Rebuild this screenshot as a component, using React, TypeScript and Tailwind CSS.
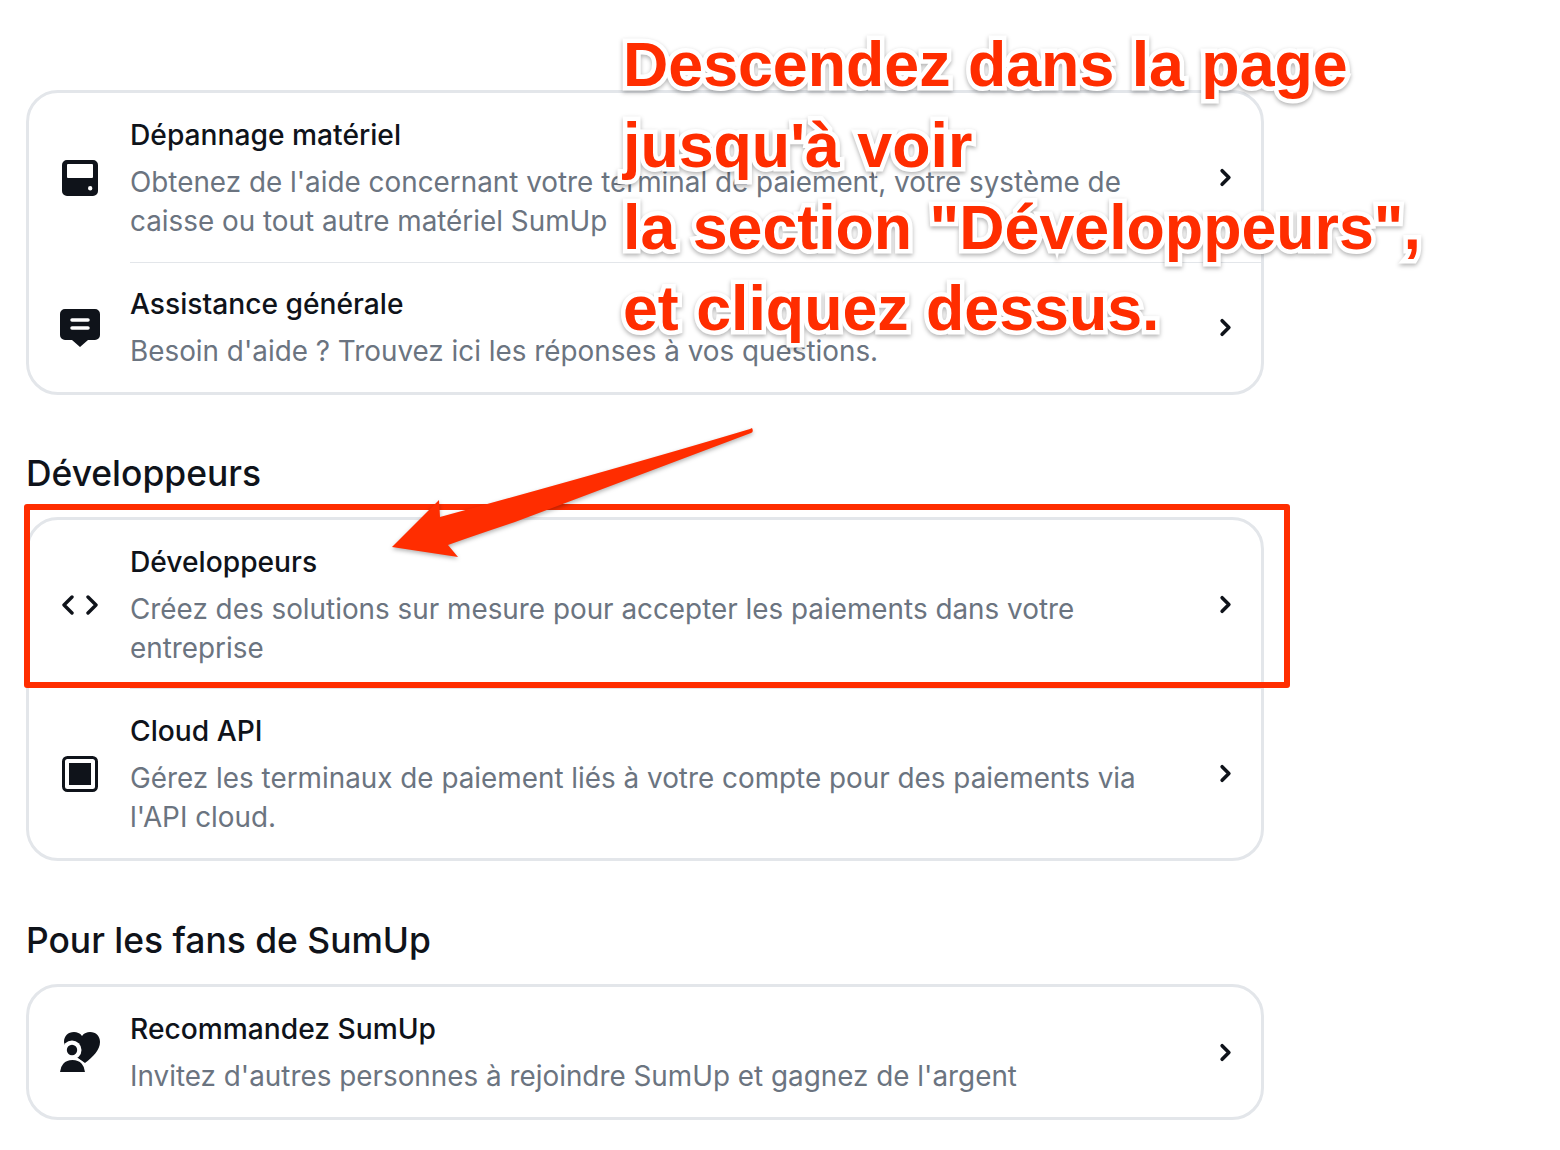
import { ChevronRight } from 'lucide-react'
import type { ReactNode } from 'react'

function TerminalIcon() {
  return (
    <svg viewBox="0 0 36 36" className="h-9 w-9" fill="none">
      <path fillRule="evenodd" clipRule="evenodd" fill="#0f131a" d="M5 0h26a5 5 0 0 1 5 5v26a5 5 0 0 1-5 5H5a5 5 0 0 1-5-5V5a5 5 0 0 1 5-5Zm0 5v12a1 1 0 0 0 1 1h24a1 1 0 0 0 1-1V5a1 1 0 0 0-1-1H6a1 1 0 0 0-1 1Zm23.2 21a2.2 2.2 0 1 0 0 4.4 2.2 2.2 0 0 0 0-4.4Z" />
    </svg>
  )
}

function ChatIcon() {
  return (
    <svg viewBox="0 0 40 38" className="h-[38px] w-10" fill="none">
      <path fill="#0f131a" d="M5 0h30a5 5 0 0 1 5 5v21a5 5 0 0 1-5 5h-7l-8 7-8-7H5a5 5 0 0 1-5-5V5a5 5 0 0 1 5-5Z" />
      <path stroke="#fff" strokeWidth="3.5" strokeLinecap="round" d="M12 11h16M12 19h16" />
    </svg>
  )
}

function CodeIcon() {
  return (
    <svg viewBox="0 0 36 20" className="h-5 w-9" fill="none" stroke="#0f131a" strokeWidth="3.4" strokeLinecap="round" strokeLinejoin="round">
      <path d="M10 2 2 10l8 8M26 2l8 8-8 8" />
    </svg>
  )
}

function SquareIcon() {
  return (
    <svg viewBox="0 0 36 36" className="h-9 w-9" fill="none">
      <rect x="1.5" y="1.5" width="33" height="33" rx="4" stroke="#0f131a" strokeWidth="3" />
      <rect x="7" y="7" width="22" height="22" fill="#0f131a" />
    </svg>
  )
}

function FanIcon() {
  return (
    <svg viewBox="0 0 40 40" className="h-10 w-10" fill="none">
      <path fill="#0f131a" d="M22 4C24 1 27 0 30 0c6 0 10 4 10 10 0 8-7 15-15 21C17 25 4 18 4 10 4 4 8 0 14 0c3 0 6 1 8 4Z" />
      <circle cx="12" cy="18" r="9.5" fill="#fff" />
      <circle cx="12" cy="18" r="5.2" fill="#0f131a" />
      <path fill="#0f131a" stroke="#fff" strokeWidth="2" d="M-1 41c0-8 5-14 13.5-14S26 33 26 41Z" />
    </svg>
  )
}

interface RowProps {
  icon: ReactNode
  title: string
  lines: string[]
  top: string
  bottom: string
  divider?: boolean
}

function Row({ icon, title, lines, top, bottom, divider }: RowProps) {
  return (
    <div className="flex items-center">
      <div className="flex w-[101px] shrink-0 items-center justify-center">{icon}</div>
      <div className={`flex flex-1 items-center pr-[22px] ${divider ? 'border-b border-[#e3e6ea]' : ''}`}>
        <div className={`flex-1 ${top} ${bottom}`}>
          <div className="text-[28.2px] leading-[34px] font-[550] text-[#0f131a]">{title}</div>
          <div className="mt-[11px] text-[27.85px] leading-[39px] text-[#6b7480]">
            {lines.map(line => <div key={line}>{line}</div>)}
          </div>
        </div>
        <ChevronRight className="h-[27px] w-[27px] text-[#0f131a]" strokeWidth={3.2} />
      </div>
    </div>
  )
}

function Card({ children }: { children: ReactNode }) {
  return <div className="w-[1238px] rounded-[32px] border-[3px] border-[#e3e6ea] bg-white">{children}</div>
}

function Heading({ children }: { children: ReactNode }) {
  return <h2 className="text-[35.4px] leading-[44px] font-[550] text-[#0f131a]">{children}</h2>
}

export default function App() {
  return (
    <div className="relative h-[1150px] w-[1560px] overflow-hidden bg-white pt-[90px] pl-[26px] font-['Inter',sans-serif]">
      <Card>
        <Row
          divider
          icon={<TerminalIcon />}
          title="Dépannage matériel"
          lines={["Obtenez de l'aide concernant votre terminal de paiement, votre système de", 'caisse ou tout autre matériel SumUp']}
          top="pt-[25px]"
          bottom="pb-[21px]"
        />
        <Row
          icon={<ChatIcon />}
          title="Assistance générale"
          lines={["Besoin d'aide ? Trouvez ici les réponses à vos questions."]}
          top="pt-[24px]"
          bottom="pb-[21px]"
        />
      </Card>

      <div className="mt-[57px] mb-[21px]"><Heading>Développeurs</Heading></div>

      <Card>
        <Row
          divider
          icon={<CodeIcon />}
          title="Développeurs"
          lines={['Créez des solutions sur mesure pour accepter les paiements dans votre', 'entreprise']}
          top="pt-[25px]"
          bottom="pb-[20px]"
        />
        <Row
          icon={<SquareIcon />}
          title="Cloud API"
          lines={["Gérez les terminaux de paiement liés à votre compte pour des paiements via", "l'API cloud."]}
          top="pt-[25px]"
          bottom="pb-[21px]"
        />
      </Card>

      <div className="mt-[58px] mb-[21px]"><Heading>Pour les fans de SumUp</Heading></div>

      <Card>
        <Row
          icon={<FanIcon />}
          title="Recommandez SumUp"
          lines={["Invitez d'autres personnes à rejoindre SumUp et gagnez de l'argent"]}
          top="pt-[25px]"
          bottom="pb-[21px]"
        />
      </Card>

      {/* annotations on top of the screenshot */}
      <div className="absolute top-[24px] left-[623px] font-['Liberation_Sans',sans-serif] text-[62.7px] leading-[81.3px] font-bold whitespace-nowrap text-[#ff2d00] [-webkit-text-stroke:9px_white] [paint-order:stroke_fill] drop-shadow-[0_2px_2px_rgba(0,0,0,0.3)]">
        <div>Descendez dans la page</div>
        <div>jusqu'à voir</div>
        <div>la section "Développeurs",</div>
        <div>et cliquez dessus.</div>
      </div>

      <div className="absolute top-[504px] left-[24px] h-[184px] w-[1266px] rounded-[3px] border-[6px] border-[#ff2d00]" />

      <svg className="absolute top-[420px] left-[380px] drop-shadow-[0_2px_2px_rgba(0,0,0,0.3)]" width="400" height="150" viewBox="0 0 400 150">
        <path fill="#ff2d00" d="M372 8 Q374 12 371 13 L135 102 Q90 117 68 125 L78 137 L12 127 L59 80 L60 97 Q250 45 370 9 Z" />
      </svg>
    </div>
  )
}
